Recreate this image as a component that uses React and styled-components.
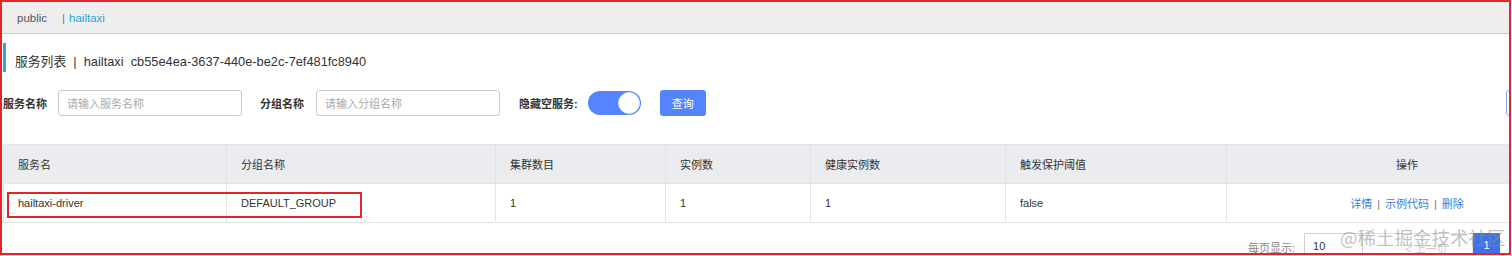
import styled, { createGlobalStyle } from 'styled-components'

const GlobalStyle = createGlobalStyle`
  body {
    margin: 0;
    background: #fff;
    font-family: "Liberation Sans", "Noto Sans CJK SC", sans-serif;
    color: #333;
  }
`

// #region styles
const Frame = styled.div`
  position: relative;
  box-sizing: border-box;
  width: 1511px;
  height: 255px;
  border: 2px solid #e0262b;
  overflow: hidden;
  background: #fff;
`

const TopBar = styled.div`
  height: 31px;
  background: #eeeeee;
  border-bottom: 1px solid #cacaca;
  display: flex;
  align-items: center;
  padding-left: 15px;
  font-size: 11.5px;
  color: #555;
`

const Crumb = styled.span`
  color: ${({ active }) => (active ? '#26a5d8' : '#555')};
`

const Sep = styled.span`
  color: #777;
  margin: 0 4px 0 15px;
`

const Title = styled.div`
  margin: 9px 0 0 1px;
  height: 29px;
  box-sizing: border-box;
  border-left: 3px solid #2aa6d9;
  display: flex;
  align-items: center;
  padding: 6px 0 0 9px;
  font-size: 12.8px;
  color: #333;
  white-space: pre;
`

const FormRow = styled.div`
  margin-top: 18px;
  display: flex;
  align-items: center;
  height: 25px;
  padding-left: 1px;
`

const Label = styled.span`
  font-size: 11px;
  font-weight: bold;
  color: #333;
  margin-left: ${({ offset }) => offset || 0}px;
`

const Input = styled.div`
  box-sizing: border-box;
  width: 184px;
  height: 26px;
  margin-left: ${({ offset }) => offset}px;
  border: 1px solid #c9c9c9;
  border-radius: 3px;
  display: flex;
  align-items: center;
  padding-left: 8px;
  font-size: 11px;
  color: #aaa;
`

const Switch = styled.div`
  position: relative;
  box-sizing: border-box;
  width: 53px;
  height: 24px;
  margin-left: 10px;
  border-radius: 12px;
  background: #5584ff;
`

const Knob = styled.span`
  position: absolute;
  right: 1px;
  top: 1px;
  box-sizing: border-box;
  width: 22px;
  height: 22px;
  border-radius: 50%;
  background: #fff;
  border: 1px solid #dfe6ff;
`

const Button = styled.div`
  box-sizing: border-box;
  width: 46px;
  height: 26px;
  margin-left: 19px;
  border-radius: 3px;
  background: #5584ff;
  color: #fff;
  font-size: 11px;
  display: flex;
  align-items: center;
  justify-content: center;
`

const EdgeButton = styled.div`
  box-sizing: border-box;
  width: 40px;
  height: 26px;
  margin-left: auto;
  margin-right: -37px;
  border: 1px solid #8fa8f0;
  border-radius: 3px;
`

const Table = styled.table`
  margin: 29px 0 0 1px;
  border-collapse: collapse;
  table-layout: fixed;
  width: 1570px;
  font-size: 11px;
`

const Th = styled.th`
  height: 38px;
  background: #ebecf0;
  border: 1px solid #e2e3e6;
  font-weight: normal;
  color: #333;
  text-align: ${({ center }) => (center ? 'center' : 'left')};
  padding: 0 0 0 14px;
`

const Td = styled.td`
  height: 38px;
  border: 1px solid #e3e3e3;
  color: #333;
  text-align: ${({ center }) => (center ? 'center' : 'left')};
  padding: 0 0 0 14px;
`

const Link = styled.a`
  color: #3b7ed8;
  text-decoration: none;
`

const Pipe = styled.span`
  color: #777;
  margin: 0 5px;
`

const Pager = styled.div`
  margin-top: 10px;
  display: flex;
  align-items: flex-start;
  padding-left: 1246px;
  font-size: 11px;
`

const PagerLabel = styled.span`
  color: #888;
  margin-top: 6px;
`

const Select = styled.div`
  box-sizing: border-box;
  width: 59px;
  height: 26px;
  margin-left: 9px;
  border: 1px solid #cfcfcf;
  padding: 6px 0 0 8px;
  color: #333;
`

const PrevButton = styled.div`
  box-sizing: border-box;
  width: 110px;
  height: 26px;
  border: 1px solid #e4e4e4;
  border-left: none;
  color: #ccc;
  padding: 6px 0 0 42px;
`

const PageNum = styled.div`
  box-sizing: border-box;
  width: 27px;
  height: 26px;
  background: #3d73e6;
  color: #fff;
  text-align: center;
  padding-top: 6px;
`

const Annotation = styled.div`
  position: absolute;
  left: 5px;
  top: 190px;
  width: 355px;
  height: 26px;
  border: 2px solid #e0262b;
  box-sizing: border-box;
`

const Watermark = styled.div`
  position: absolute;
  left: 1338px;
  top: 223px;
  font-size: 18.5px;
  line-height: 24px;
  white-space: nowrap;
  color: rgba(140, 140, 140, 0.55);
  font-family: "Noto Sans CJK SC", sans-serif;
`
// #endregion

const columns = [
  { name: '服务名', width: 223 },
  { name: '分组名称', width: 269 },
  { name: '集群数目', width: 170 },
  { name: '实例数', width: 145 },
  { name: '健康实例数', width: 195 },
  { name: '触发保护阈值', width: 221 },
  { name: '操作', width: 347, center: true },
]

const rows = [['hailtaxi-driver', 'DEFAULT_GROUP', '1', '1', '1', 'false']]

export default function App() {
  return (
    <>
      <GlobalStyle />
      <Frame>
        <TopBar>
          <Crumb>public</Crumb>
          <Sep>|</Sep>
          <Crumb active>hailtaxi</Crumb>
        </TopBar>
        <Title>{'服务列表  |  hailtaxi  cb55e4ea-3637-440e-be2c-7ef481fc8940'}</Title>
        <FormRow>
          <Label>服务名称</Label>
          <Input offset={11}>请输入服务名称</Input>
          <Label offset={18}>分组名称</Label>
          <Input offset={12}>请输入分组名称</Input>
          <Label offset={19}>隐藏空服务:</Label>
          <Switch>
            <Knob />
          </Switch>
          <Button>查询</Button>
          <EdgeButton />
        </FormRow>
        <Table>
          <colgroup>
            {columns.map((c) => (
              <col key={c.name} style={{ width: c.width }} />
            ))}
          </colgroup>
          <thead>
            <tr>
              {columns.map((c) => (
                <Th key={c.name} center={c.center}>
                  {c.name}
                </Th>
              ))}
            </tr>
          </thead>
          <tbody>
            {rows.map((r) => (
              <tr key={r[0]}>
                {r.map((v, i) => (
                  <Td key={i}>{v}</Td>
                ))}
                <Td center>
                  <Link>详情</Link>
                  <Pipe>|</Pipe>
                  <Link>示例代码</Link>
                  <Pipe>|</Pipe>
                  <Link>删除</Link>
                </Td>
              </tr>
            ))}
          </tbody>
        </Table>
        <Pager>
          <PagerLabel>每页显示:</PagerLabel>
          <Select>10</Select>
          <PrevButton>{'< 上一页'}</PrevButton>
          <PageNum>1</PageNum>
        </Pager>
        <Annotation />
        <Watermark>@稀土掘金技术社区</Watermark>
      </Frame>
    </>
  )
}
